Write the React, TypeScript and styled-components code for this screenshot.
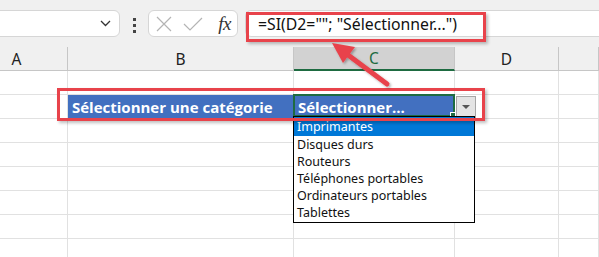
import React from 'react';
import styled, { createGlobalStyle } from 'styled-components';

const GlobalStyle = createGlobalStyle`
    html, body {
        margin: 0;
        padding: 0;
        background: #ffffff;
        font-family: 'Noto Sans', 'Open Sans', sans-serif;
    }
`;

const Page = styled.div`
    position: relative;
    width: 599px;
    height: 257px;
    overflow: hidden;
    background: #ffffff;
`;

const Toolbar = styled.div`
    display: flex;
    align-items: flex-start;
    height: 47px;
    box-sizing: border-box;
    padding-top: 10px;
    background: #f0f0f0;
`;

const NameBox = styled.div`
    display: flex;
    align-items: center;
    justify-content: flex-end;
    box-sizing: border-box;
    width: 130px;
    height: 27px;
    margin-left: -10px;
    padding-right: 8px;
    background: #ffffff;
    border: 1px solid #d6d6d6;
    border-radius: 6px;
`;

const Kebab = styled.div`
    display: flex;
    flex-direction: column;
    align-items: center;
    gap: 3px;
    width: 28px;
    padding-top: 8px;
    span {
        width: 3px;
        height: 3px;
        background: #444;
    }
`;

const FxGroup = styled.div`
    display: flex;
    align-items: center;
    box-sizing: border-box;
    width: 90px;
    height: 27px;
    padding: 0 6px 0 7px;
    gap: 11px;
    background: #ffffff;
    border: 1px solid #d6d6d6;
    border-radius: 6px;
`;

const Fx = styled.span`
    margin-left: auto;
    font-family: 'Liberation Serif', serif;
    font-style: italic;
    font-size: 19px;
    color: #333;
    letter-spacing: -0.5px;
`;

const FormulaInput = styled.div`
    flex: 1;
    display: flex;
    align-items: center;
    box-sizing: border-box;
    height: 27px;
    margin-left: 7px;
    padding-left: 12px;
    background: #ffffff;
    border: 1px solid #d6d6d6;
    border-right: none;
    border-radius: 6px 0 0 6px;
    font-size: 15.8px;
    color: #111;
    white-space: pre;
`;

const Grid = styled.div`
    display: grid;
    grid-template-columns: 102px 226px 161px 104px 1fr;
    margin-left: -34px;
`;

const HeadCell = styled.div<{ $active?: boolean }>`
    display: flex;
    align-items: center;
    justify-content: center;
    box-sizing: border-box;
    height: 24px;
    background: ${(p) => (p.$active ? '#d2d2d2' : '#f0f0f0')};
    border-right: 1px solid #c6c6c6;
    border-bottom: ${(p) => (p.$active ? '2px solid #1e6b41' : '1px solid #c6c6c6')};
    font-size: 15.5px;
    color: ${(p) => (p.$active ? '#1e6b41' : '#222')};
`;

const Cell = styled.div<{ $fill?: boolean }>`
    position: relative;
    display: flex;
    align-items: center;
    box-sizing: border-box;
    height: 24px;
    padding-left: 4px;
    background: ${(p) => (p.$fill ? '#4270c0' : '#ffffff')};
    border-right: 1px solid ${(p) => (p.$fill ? '#4270c0' : '#e1e1e1')};
    border-bottom: 1px solid #e1e1e1;
    font-family: 'Open Sans', sans-serif;
    font-weight: 700;
    font-size: 15px;
    color: #ffffff;
    white-space: nowrap;
`;

const Selection = styled.div`
    position: absolute;
    left: -1px;
    top: -1px;
    right: -1px;
    bottom: 1px;
    border: 2px solid #1e6b41;
    pointer-events: none;
    &::after {
        content: '';
        position: absolute;
        right: -4px;
        bottom: -4px;
        width: 5px;
        height: 5px;
        background: #1e6b41;
        border: 1px solid #ffffff;
    }
`;

const DropButton = styled.div`
    display: flex;
    align-items: center;
    justify-content: center;
    box-sizing: border-box;
    width: 20px;
    height: 22px;
    margin-left: -3px;
    background: #e4e4e4;
    border: 1px solid #a6a6a6;
    &::before {
        content: '';
        border-left: 4px solid transparent;
        border-right: 4px solid transparent;
        border-top: 4px solid #555;
    }
`;

const ListBox = styled.div`
    position: absolute;
    left: 293px;
    top: 116px;
    width: 182px;
    box-sizing: border-box;
    padding-bottom: 1px;
    background: #ffffff;
    border: 1px solid #000000;
`;

const ListItem = styled.div<{ $active?: boolean }>`
    height: 17px;
    line-height: 17px;
    padding-left: 3px;
    font-size: 12.5px;
    color: ${(p) => (p.$active ? '#ffffff' : '#111')};
    background: ${(p) => (p.$active ? '#0078d7' : 'transparent')};
    &:first-child {
        height: 19px;
        line-height: 20px;
    }
`;

const Highlight = styled.div<{ $left: number; $top: number; $w: number; $h: number }>`
    position: absolute;
    left: ${(p) => p.$left}px;
    top: ${(p) => p.$top}px;
    width: ${(p) => p.$w}px;
    height: ${(p) => p.$h}px;
    box-sizing: border-box;
    border: 3px solid #e8434b;
    box-shadow: 2px 2px 3px rgba(0, 0, 0, 0.25);
    pointer-events: none;
`;

const Overlay = styled.svg`
    position: absolute;
    left: 0;
    top: 0;
    pointer-events: none;
`;

const columns = ['A', 'B', 'C', 'D', ''];
const items = ['Imprimantes', 'Disques durs', 'Routeurs', 'Téléphones portables', 'Ordinateurs portables', 'Tablettes'];

export default function App() {
    const rows = Array.from({ length: 8 }, (_, i) => i);
    return (
        <Page>
            <GlobalStyle />
            <Toolbar>
                <NameBox>
                    <svg width="11" height="7" viewBox="0 0 11 7">
                        <path d="M1 1l4.5 4.5L10 1" fill="none" stroke="#333" strokeWidth="1.3" />
                    </svg>
                </NameBox>
                <Kebab>
                    <span />
                    <span />
                    <span />
                </Kebab>
                <FxGroup>
                    <svg width="16" height="16" viewBox="0 0 16 16">
                        <path d="M1 1l14 14M15 1L1 15" stroke="#b4b4b4" strokeWidth="1.2" />
                    </svg>
                    <svg width="20" height="16" viewBox="0 0 20 16">
                        <path d="M1 8l6 6L19 2" fill="none" stroke="#b4b4b4" strokeWidth="1.2" />
                    </svg>
                    <Fx>fx</Fx>
                </FxGroup>
                <FormulaInput>=SI(D2=""; "Sélectionner...")</FormulaInput>
            </Toolbar>
            <Grid>
                {columns.map((c) => (
                    <HeadCell key={c || 'e'} $active={c === 'C'}>
                        {c}
                    </HeadCell>
                ))}
                {rows.map((r) =>
                    columns.map((c, ci) => {
                        const fill = r === 1 && (ci === 1 || ci === 2);
                        return (
                            <Cell key={`${r}-${ci}`} $fill={fill}>
                                {r === 1 && ci === 1 && 'Sélectionner une catégorie'}
                                {r === 1 && ci === 2 && (
                                    <>
                                        Sélectionner...
                                        <Selection />
                                    </>
                                )}
                                {r === 1 && ci === 3 && <DropButton />}
                            </Cell>
                        );
                    })
                )}
            </Grid>
            <ListBox>
                {items.map((it, i) => (
                    <ListItem key={it} $active={i === 0}>
                        {it}
                    </ListItem>
                ))}
            </ListBox>
            <Highlight $left={246} $top={12} $w={240} $h={30} />
            <Highlight $left={57} $top={88} $w={428} $h={33} />
            <Overlay width="599" height="257">
                <defs>
                    <filter id="sh" x="-20%" y="-20%" width="140%" height="140%">
                        <feDropShadow dx="1.5" dy="1.5" stdDeviation="1.2" floodColor="#000" floodOpacity="0.3" />
                    </filter>
                </defs>
                <g filter="url(#sh)">
                    <line x1="387" y1="84" x2="344" y2="52" stroke="#e8434b" strokeWidth="5" strokeLinecap="round" />
                    <polygon points="332,43 355,47 343,63" fill="#e8434b" />
                </g>
            </Overlay>
        </Page>
    );
}
